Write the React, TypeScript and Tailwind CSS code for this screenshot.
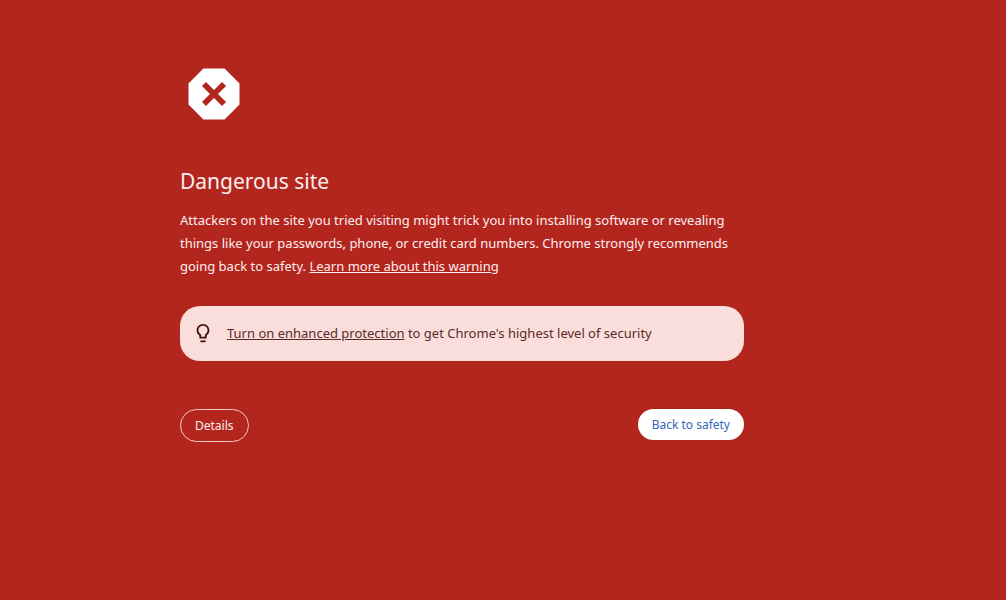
import React from 'react';

const DangerIcon: React.FC = () => (
  <svg viewBox="0 0 24 24" className="size-[68px] fill-white" aria-hidden="true">
    <path d="M15.73 3H8.27L3 8.27v7.46L8.27 21h7.46L21 15.73V8.27L15.73 3zm.51 11.83-1.41 1.41L12 13.41l-2.83 2.83-1.41-1.41L10.59 12 7.76 9.17l1.41-1.41L12 10.59l2.83-2.83 1.41 1.41L13.41 12l2.83 2.83z" />
  </svg>
);

const BulbIcon: React.FC = () => (
  <svg viewBox="0 1 24 24" className="size-[22px] shrink-0 fill-[#410e0b]" aria-hidden="true">
    <path d="M9 20v1c0 .55.45 1 1 1h4c.55 0 1-.45 1-1v-1H9zm3-18C8.14 2 5 5.14 5 9c0 2.38 1.19 4.47 3 5.74V17c0 .55.45 1 1 1h6c.55 0 1-.45 1-1v-2.26c1.81-1.27 3-3.36 3-5.74 0-3.86-3.14-7-7-7zm2.85 11.1-.85.6V16h-4v-2.3l-.85-.6C7.8 12.16 7 10.63 7 9c0-2.76 2.24-5 5-5s5 2.24 5 5c0 1.63-.8 3.16-2.15 4.1z" />
  </svg>
);

const App: React.FC = () => {
  return (
    <div className="min-h-screen bg-[#b3261e] pt-[60px] pr-[82px] font-['Noto_Sans',sans-serif] text-[#fceeee]">
      <main className="mx-auto w-full max-w-[564px]">
        <DangerIcon />

        <h1 className="mt-[37px] text-[21px] leading-8">Dangerous site</h1>
        <p className="mt-3 text-[13px] leading-[23px]">
          Attackers on the site you tried visiting might trick you into installing software or revealing things like
          your passwords, phone, or credit card numbers. Chrome strongly recommends going back to safety.{' '}
          <a href="#" className="underline">Learn more about this warning</a>
        </p>

        {/* Enhanced protection tip */}
        <div className="mt-7 flex min-h-[55px] items-center gap-[13px] rounded-[20px] bg-[#f9dedc] px-3 text-[13px] text-[#5c2b29]">
          <BulbIcon />
          <p>
            <a href="#" className="underline">Turn on enhanced protection</a> to get Chrome's highest level of security
          </p>
        </div>

        <div className="mt-12 flex items-start justify-between text-xs">
          <button type="button" className="h-[33px] rounded-full border border-[#f2c9c6] px-3.5">
            Details
          </button>
          <button type="button" className="h-[31px] rounded-full bg-white px-3.5 text-[#3369b8]">
            Back to safety
          </button>
        </div>
      </main>
    </div>
  );
};

export default App;
